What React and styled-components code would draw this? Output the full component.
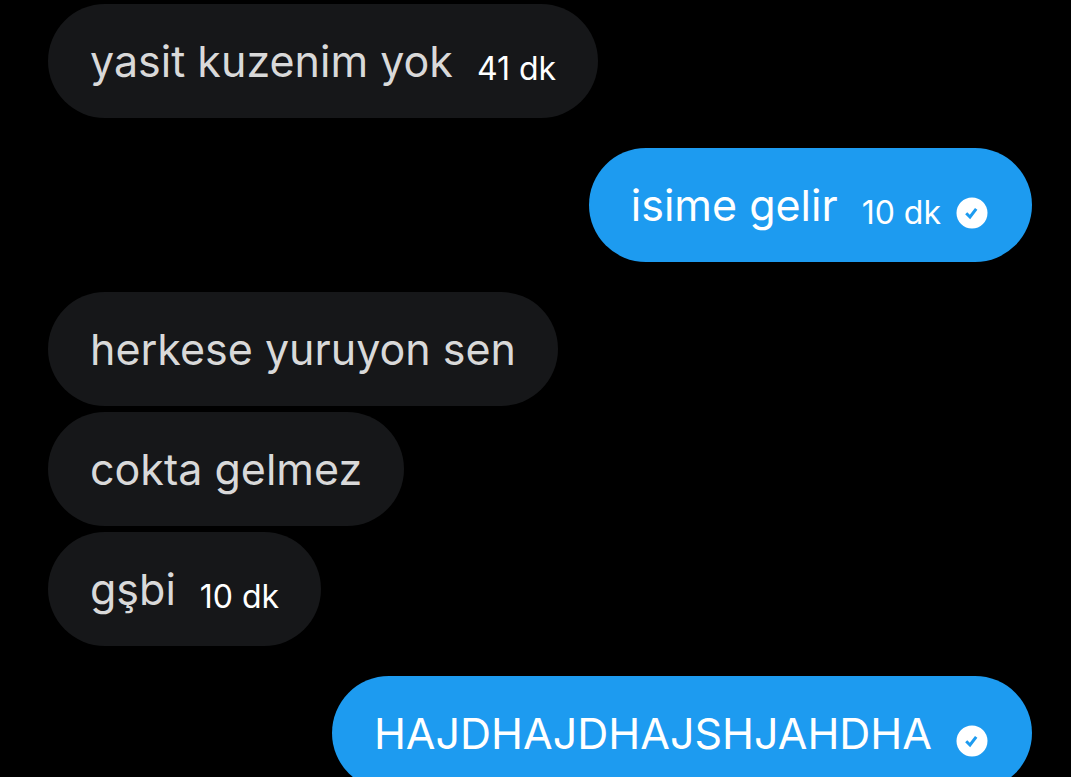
import styled, { createGlobalStyle } from "styled-components";

const messages = [
  { id: 1, text: "yasit kuzenim yok", time: "41 dk" },
  { id: 2, text: "isime gelir", time: "10 dk", mine: true, seen: true },
  { id: 3, text: "herkese yuruyon sen" },
  { id: 4, text: "cokta gelmez" },
  { id: 5, text: "gşbi", time: "10 dk" },
  { id: 6, text: "HAJDHAJDHAJSHJAHDHA", mine: true, seen: true },
];

function SeenIcon() {
  return (
    <Badge viewBox="0 0 32 32" role="img" aria-label="Görüldü">
      <circle cx="16" cy="16" r="15.5" fill="#ffffff" />
      <path
        d="M10.2 16.3l3.8 3.7 6.2-8.2"
        fill="none"
        stroke="#1d9bf0"
        strokeWidth="3"
      />
    </Badge>
  );
}

function Message({ text, time, mine, seen, grouped }) {
  return (
    <Row $mine={mine} $grouped={grouped}>
      <Bubble $mine={mine}>
        <Text $mine={mine}>{text}</Text>
        {(time || seen) && (
          <Meta>
            {time && <Time>{time}</Time>}
            {seen && <SeenIcon />}
          </Meta>
        )}
      </Bubble>
    </Row>
  );
}

export default function App() {
  return (
    <>
      <GlobalStyle />
      <Thread>
        {messages.map((message, index) => (
          <Message
            key={message.id}
            {...message}
            grouped={index > 0 && !message.mine && !messages[index - 1].mine}
          />
        ))}
      </Thread>
    </>
  );
}

const GlobalStyle = createGlobalStyle`
  body {
    margin: 0;
    background-color: #000000;
  }
`;

const Thread = styled.ul`
  display: flex;
  flex-direction: column;
  margin: 0;
  padding: 4px 39px 0 48px;
  list-style: none;
  font-family: Inter, "Liberation Sans", sans-serif;
`;

const Row = styled.li`
  display: flex;
  justify-content: ${(props) => (props.$mine ? "flex-end" : "flex-start")};
  margin-top: ${(props) => (props.$grouped ? 6 : 30)}px;

  &:first-child {
    margin-top: 0;
  }
`;

const Bubble = styled.div`
  display: flex;
  align-items: flex-end;
  gap: 24px;
  padding: 25px ${(props) => (props.$mine ? 44 : 42)}px 25px 42px;
  border-radius: 57px;
  background-color: ${(props) => (props.$mine ? "#1d9bf0" : "#161719")};
`;

const Text = styled.span`
  color: ${(props) => (props.$mine ? "#ffffff" : "#d9d9d9")};
  font-size: 43px;
  line-height: 64px;
`;

const Meta = styled.span`
  display: flex;
  align-items: center;
  gap: 15px;
  min-height: 48px;
`;

const Time = styled.span`
  color: #ffffff;
  font-size: 32px;
  line-height: 48px;
`;

const Badge = styled.svg`
  width: 32px;
  height: 32px;
`;
